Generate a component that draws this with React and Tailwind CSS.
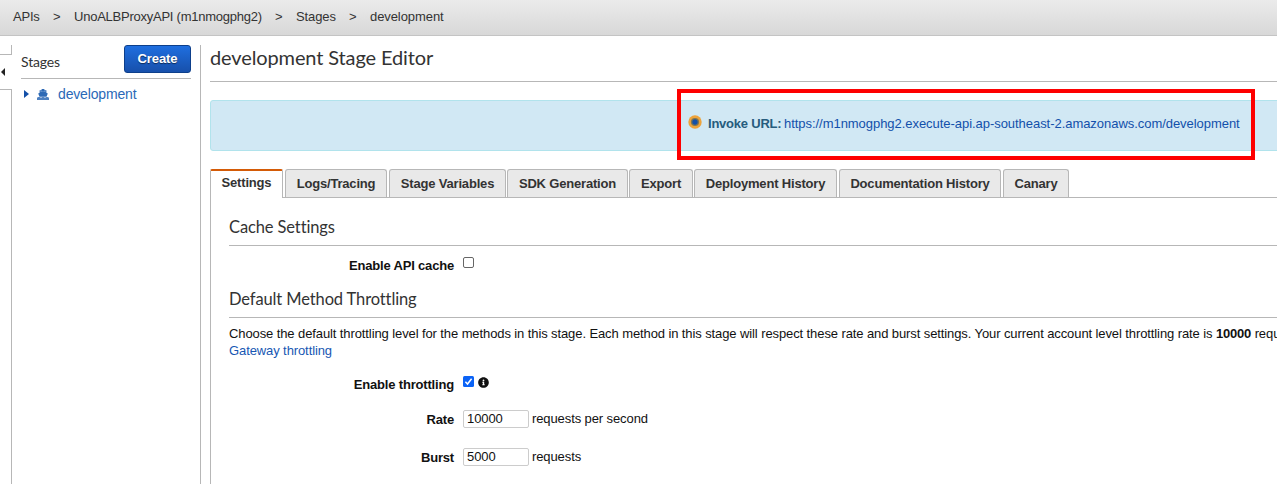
import { FaInfoCircle } from "react-icons/fa";

const tabs = [
  ["Logs/Tracing", "w-[102px] ml-[2px]"],
  ["Stage Variables", "w-[117px] ml-[2px]"],
  ["SDK Generation", "w-[121px] ml-px"],
  ["Export", "w-[64px] ml-px"],
  ["Deployment History", "w-[143px] ml-px"],
  ["Documentation History", "w-[162px] ml-[2px]"],
  ["Canary", "w-[66px] ml-[2px]"],
];

const crumbs = [
  ["APIs", "w-[40px] tracking-[-0.2px]"],
  [">", "w-[21px]"],
  ["UnoALBProxyAPI (m1nmogphg2)", "w-[201px] tracking-[-0.24px]"],
  [">", "w-[21px]"],
  ["Stages", "w-[53px] tracking-[-0.1px]"],
  [">", "w-[21px]"],
  ["development", "w-[80px] tracking-[-0.08px]"],
];

function Breadcrumbs() {
  return (
    <header className="flex h-[36px] items-center border-b border-[#c4c4c4] bg-linear-to-b from-[#ebebeb] to-[#d8d8d8] pb-[3px] pl-[13px] text-[#333]">
      {crumbs.map(([label, width], i) => (
        <span key={i} className={`shrink-0 whitespace-nowrap ${width}`}>{label}</span>
      ))}
    </header>
  );
}

function CollapseRail() {
  return (
    <div className="flex w-[12px] shrink-0 flex-col">
      <div className="h-[10px] border-r border-b border-[#b7b7b7]" />
      <div className="flex h-[34px] items-center pl-px">
        <svg width="4" height="8" viewBox="0 0 4 8" fill="#222"><path d="M4 0v8L0 4z" /></svg>
      </div>
      <div className="flex-1 border-t border-r border-[#b7b7b7]" />
    </div>
  );
}

function ShipIcon() {
  return (
    <svg className="ml-[8px] shrink-0" width="12" height="11" viewBox="0 0 12 11" fill="#2f6ab5">
      <path d="M4.6 0h2.8v1.2h2v2.6l1.4.6-1.3 3.3H2.5L1.2 4.4l1.4-.6V1.2h2z" />
      <path d="M3.5 2.3h5v.7L6 2.4l-2.5.6z" fill="#8fb2dc" />
      <path d="M0 8.6c1 0 1-.7 2-.7s1 .7 2 .7 1-.7 2-.7 1 .7 2 .7 1-.7 2-.7 1 .7 2 .7V11H0z" opacity=".85" />
    </svg>
  );
}

function Sidebar() {
  return (
    <aside className="ml-[9px] w-[170px] shrink-0">
      <div className="flex h-[34px] items-start justify-between border-b border-[#b7b7b7]">
        <h2 className="mt-[8px] font-['Lato',sans-serif] text-[14px] leading-[18px] tracking-[-0.15px] text-[#333]">Stages</h2>
        <button className="h-[28px] w-[67px] rounded-[3px] border border-[#0d3f8b] bg-linear-to-b from-[#1f6fe0] to-[#1750ab] text-[13px] leading-[26px] font-bold tracking-[-0.1px] text-white [text-shadow:0_1px_1px_#0008]">Create</button>
      </div>
      <div className="mt-[7px] flex h-[16px] items-center pl-[3px] text-[14px] text-[#2a69b8]">
        <svg width="5" height="8" viewBox="0 0 5 8" fill="#1450a8"><path d="M0 0v8L5 4z" /></svg>
        <ShipIcon />
        <a className="ml-[9px] tracking-[-0.16px]">development</a>
      </div>
    </aside>
  );
}

function InvokeBanner() {
  return (
    <div className="mt-[18px] flex h-[51px] items-start justify-center rounded-[3px] border border-[#b1e3ec] bg-[#d1e8f4]">
      <div className="relative mt-[14px] flex h-[17px] items-center text-[#265c7d]">
        <svg className="mr-[6px] -mt-[3px]" width="14" height="14" viewBox="0 0 14 14">
          <circle cx="7" cy="7" r="6.7" fill="#eda33b" />
          <circle cx="7" cy="7" r="4.1" fill="#7d7654" />
          <circle cx="7" cy="7" r="2.7" fill="#1450a8" />
        </svg>
        <b className="w-[76px] tracking-[-0.22px] whitespace-nowrap">Invoke URL:</b>
        <a className="w-[455px] tracking-[-0.045px] whitespace-nowrap text-[#1250ab]">https://m1nmogphg2.execute-api.ap-southeast-2.amazonaws.com/development</a>
        <div className="pointer-events-none absolute -top-[26px] -left-[11px] h-[71px] w-[578px] border-4 border-[#fe0000]" />
      </div>
    </div>
  );
}

function TabBar() {
  return (
    <nav className="mt-[18px] flex h-[29px] border-b border-[#b7b7b7] font-bold tracking-[-0.18px] whitespace-nowrap text-[#333]">
      <div className="h-[29px] w-[73px] rounded-t-[2px] border-x border-t-2 border-x-[#b7b7b7] border-t-[#d45b07] bg-white text-center leading-[24px]">Settings</div>
      {tabs.map(([label, width]) => (
        <div key={label} className={`h-[28px] rounded-t-[3px] border border-b-0 border-[#b7b7b7] bg-[#e9e9e9] text-center leading-[28px] ${width}`}>{label}</div>
      ))}
    </nav>
  );
}

function SectionTitle({ children }) {
  return <h3 className="h-[28px] border-b border-[#b7b7b7] font-['Lato',sans-serif] text-[16.5px] leading-[19px] tracking-[-0.12px] text-[#333] [font-variant-ligatures:none]">{children}</h3>;
}

function Checkbox({ checked }) {
  return checked ? (
    <svg width="11" height="11" viewBox="0 0 11 11">
      <rect width="11" height="11" rx="1.5" fill="#0b63f6" />
      <path d="M2.4 5.8 4.5 8 8.6 2.7" fill="none" stroke="#fff" strokeWidth="1.5" />
    </svg>
  ) : (
    <span className="block h-[11px] w-[11px] rounded-[2px] border border-[#666] bg-white" />
  );
}

function Label({ children }) {
  return <label className="w-[225px] text-right font-bold tracking-[-0.18px]">{children}</label>;
}

function NumberRow({ label, value, unit }) {
  return (
    <div className="flex h-[18px] items-center">
      <Label>{label}</Label>
      <div className="ml-[9px] h-[18px] w-[66px] rounded-[2px] border border-[#ccc] pl-[3px] leading-[16px] tracking-[-0.1px]">{value}</div>
      <span className="-mt-[2px] ml-[3px] tracking-[-0.1px]">{unit}</span>
    </div>
  );
}

export default function App() {
  return (
    <div className="flex h-[484px] w-full flex-col overflow-hidden bg-white font-['Liberation_Sans',Arial,sans-serif] text-[13px] leading-[17px] text-[#111]">
      <Breadcrumbs />
      <div className="flex min-h-0 flex-1 pt-[9px]">
        <CollapseRail />
        <Sidebar />
        <main className="ml-[9px] shrink-0 border-l border-[#b7b7b7] pl-[9px]">
          <div className="flex h-full w-[1507px] flex-col">
            <h1 className="h-[37px] shrink-0 border-b border-[#b7b7b7] font-['Lato',sans-serif] text-[20px] leading-[24px] tracking-[-0.12px] text-[#333]">development Stage Editor</h1>
            <InvokeBanner />
            <TabBar />
            <section className="flex-1 border-l border-[#b7b7b7] pt-[20px] pl-[18px]">
              <SectionTitle>Cache Settings</SectionTitle>
              <div className="mt-[11px] flex h-[17px]">
                <Label>Enable API cache</Label>
                <div className="ml-[9px]"><Checkbox /></div>
              </div>
              <div className="mt-[16px]"><SectionTitle>Default Method Throttling</SectionTitle></div>
              <p className="mt-[7px] mb-[17px] tracking-[-0.1px] whitespace-nowrap">
                Choose the default throttling level for the methods in this stage. Each method in this stage will respect these rate and burst settings. Your current account level throttling rate is <b className="tracking-[-0.18px]">10000</b> requests per second
                <br />
                <a className="text-[#1757b3]">Gateway throttling</a>
              </p>
              <div className="flex h-[17px]">
                <Label>Enable throttling</Label>
                <div className="ml-[9px]"><Checkbox checked /></div>
                <FaInfoCircle className="mt-px ml-[3.5px] h-[11px] w-[11px] text-[#111]" />
              </div>
              <div className="mt-[17px] flex flex-col gap-[20px]">
                <NumberRow label="Rate" value="10000" unit="requests per second" />
                <NumberRow label="Burst" value="5000" unit="requests" />
              </div>
            </section>
          </div>
        </main>
      </div>
    </div>
  );
}
